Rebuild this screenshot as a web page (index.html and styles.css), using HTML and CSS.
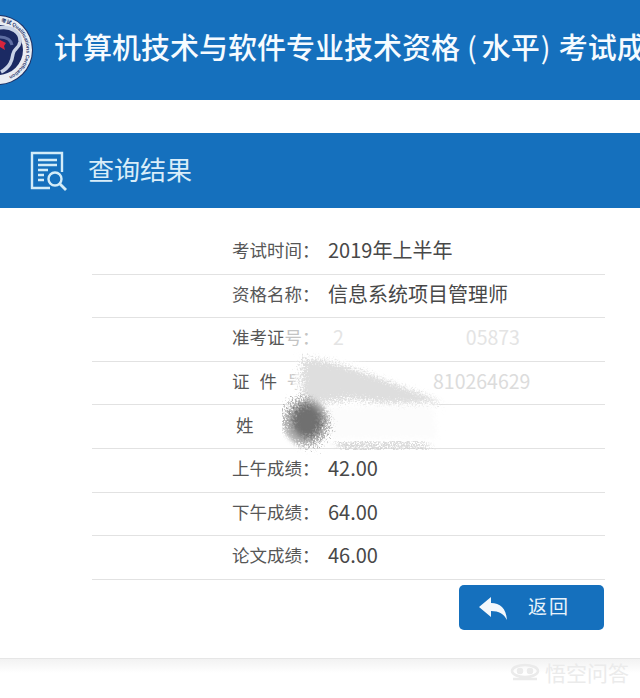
FILE: index.html
```html
<!DOCTYPE html>
<html lang="zh-CN">
<head>
    <meta charset="UTF-8">
    <meta name="viewport" content="width=device-width, initial-scale=1.0">
    <title>查询结果</title>
    <link rel="stylesheet" href="styles.css">
</head>
<body>
    <header class="top-bar">
        <svg class="logo" viewBox="0 0 70 70" width="70" height="70">
            <defs>
                <path id="ringPath" d="M35 6.5a28.5 28.5 0 1 1-.1 0"/>
            </defs>
            <circle cx="35" cy="35" r="35" fill="#1d2f63"/>
            <circle cx="35" cy="35" r="34" fill="#e9edf3"/>
            <circle cx="35" cy="35" r="25" fill="#1b2a63"/>
            <path d="M36 13c12-2 22 4 21 14-1 7-6 6-7 12-1 7-3 13-12 18" fill="none" stroke="#c9d3e6" stroke-width="3.5"/>
            <path d="M36 22c8 0 12 3 13 8" fill="none" stroke="#5f6fa3" stroke-width="3"/>
            <path d="M37 25l6 3-2 3 1 4-5-3z" fill="#d8243c"/>
            <text class="logo-ring-text"><textPath href="#ringPath" startOffset="3">考试 Qualifications Certification</textPath></text>
        </svg>
        <h1 class="top-title">计算机技术与软件专业技术资格<span class="paren-open">(</span>水平<span class="paren-close">)</span>考试成</h1>
    </header>

    <main class="result-panel">
        <div class="panel-head">
            <svg class="panel-icon" viewBox="0 0 38 40" width="38" height="40" fill="none" stroke="#d3ecf8" stroke-width="2.4">
                <path d="M20 37H2V2h30v19"/>
                <path d="M8 9h19M8 14h19M8 19h10M8 24h6M8 29h6"/>
                <circle cx="25" cy="28" r="6.5"/>
                <path d="M30 33l6 6" stroke-width="2.8"/>
            </svg>
            <h2 class="panel-title">查询结果</h2>
        </div>

        <div class="result-rows">
            <div class="row"><span class="label">考试时间：</span><span class="value">2019年上半年</span></div>
            <div class="row"><span class="label">资格名称：</span><span class="value">信息系统项目管理师</span></div>
            <div class="row"><span class="label">准考证<span class="label-faded">号：</span></span><span class="value faded ticket-head">2</span><span class="value faded ticket-no">05873</span></div>
            <div class="row"><span class="label id-label">证 件 <span class="label-faded">号：</span></span><span class="value faded id-no">810264629</span></div>
            <div class="row"><span class="label name-label">姓</span></div>
            <div class="row"><span class="label">上午成绩：</span><span class="value">42.00</span></div>
            <div class="row"><span class="label">下午成绩：</span><span class="value">64.00</span></div>
            <div class="row"><span class="label">论文成绩：</span><span class="value">46.00</span></div>

            <!-- smudge painted over the personal details -->
            <svg class="smudge" viewBox="0 0 190 110" width="190" height="110">
                <defs>
                    <filter id="speckle" x="-30%" y="-30%" width="160%" height="160%">
                        <feTurbulence type="fractalNoise" baseFrequency="0.45" numOctaves="2" seed="4" result="noise"/>
                        <feGaussianBlur in="SourceGraphic" stdDeviation="3" result="soft"/>
                        <feDisplacementMap in="soft" in2="noise" scale="12"/>
                    </filter>
                    <filter id="coarse" x="-40%" y="-40%" width="180%" height="180%">
                        <feTurbulence type="fractalNoise" baseFrequency="0.6" numOctaves="2" seed="9" result="noise"/>
                        <feGaussianBlur in="SourceGraphic" stdDeviation="2" result="soft"/>
                        <feDisplacementMap in="soft" in2="noise" scale="24"/>
                    </filter>
                </defs>
                <path d="M16 12L60 8 150 40 158 88 30 90 8 60z" fill="#fff" filter="url(#speckle)"/>
                <path d="M22 8C55 6 110 34 160 50C130 56 100 54 70 48C50 52 35 54 22 50C18 36 18 20 22 8z" fill="#dedede" filter="url(#coarse)"/>
                <path d="M44 56L150 54 156 88 50 88z" fill="#fcfcfc" filter="url(#speckle)"/>
                <ellipse cx="24" cy="71" rx="23" ry="24" fill="#b4b4b4" filter="url(#coarse)"/>
                <ellipse cx="25" cy="70" rx="15" ry="17" fill="#6f6f6f" filter="url(#speckle)"/>
                <path d="M50 92L150 92 142 96 60 97z" fill="#c8c8c8" filter="url(#coarse)"/>
            </svg>
        </div>

        <div class="actions">
            <button class="back-btn" type="button">
                <svg class="back-icon" viewBox="0 0 28 23" width="28" height="23" fill="#f4f8fc">
                    <path d="M0 10L12 0v6c9 0 15 5 16 17-3-6-8-9-16-9v6z"/>
                </svg>
                <span>返回</span>
            </button>
        </div>
    </main>

    <div class="page-foot"></div>

    <div class="watermark">
        <svg viewBox="0 0 30 18" width="30" height="18" fill="none" stroke="#ebebeb" stroke-width="2.5">
            <ellipse cx="15" cy="8" rx="13" ry="6"/>
            <circle cx="10" cy="8" r="2" fill="#ebebeb"/>
            <circle cx="20" cy="8" r="2" fill="#ebebeb"/>
            <path d="M3 16h24"/>
        </svg>
        <span>悟空问答</span>
    </div>
</body>
</html>
```

FILE: styles.css
```css
html, body {
    margin: 0;
    height: 698px;
    overflow: hidden;
}

body {
    position: relative;
    background-color: #fff;
    font-family: "Noto Sans CJK SC", "Roboto", sans-serif;
}

.top-bar {
    display: flex;
    align-items: center;
    height: 100px;
    background-color: #1570bd;
    overflow: hidden;
}

.logo {
    flex: none;
    margin-left: -37px;
}

.logo-ring-text {
    font-family: "Liberation Sans", sans-serif;
    font-size: 5px;
    font-weight: bold;
    fill: #26386e;
}

.top-title {
    flex: none;
    margin: -9px 0 0 21px;
    color: #f6fbff;
    font-size: 29px;
    font-weight: 500;
    white-space: nowrap;
}

.paren-open {
    margin: 0 5px 0 7px;
    font-weight: 400;
}

.paren-close {
    margin: 0 8px 0 1px;
    font-weight: 400;
}

.result-panel {
    margin-top: 33px;
}

.panel-head {
    display: flex;
    align-items: center;
    height: 75px;
    padding-left: 30px;
    background-color: #1570bd;
}

.panel-title {
    margin: -4px 0 0 20px;
    color: #d9edf9;
    font-size: 26px;
    font-weight: 400;
}

.result-rows {
    position: relative;
    margin: 23px 35px 0 92px;
}

.row {
    display: flex;
    align-items: center;
    box-sizing: border-box;
    height: 43.6px;
    padding: 0 0 5px 140px;
    border-bottom: 1.5px solid #e2e2e2;
}

.label {
    flex: none;
    width: 96px;
    color: #565656;
    font-size: 17.5px;
    white-space: pre;
}

.label-faded {
    color: #c4c4c4;
}

.id-label {
    word-spacing: 6px;
}

.name-label {
    padding-left: 4px;
}

.value {
    color: #484848;
    font-family: "Noto Sans CJK SC", sans-serif;
    font-size: 20px;
}

.faded {
    color: #e4e4e4;
    font-size: 19.5px;
}

.ticket-head {
    margin-left: 5px;
}

.ticket-no {
    margin-left: 122px;
}

.id-no {
    margin-left: 105px;
    color: #dcdcdc;
}

.smudge {
    position: absolute;
    left: 190px;
    top: 120px;
}

.actions {
    display: flex;
    justify-content: flex-end;
    margin: 5px 36px 0 0;
}

.back-btn {
    display: flex;
    align-items: center;
    width: 145px;
    height: 45px;
    padding: 0 0 0 20px;
    border: none;
    border-radius: 5px;
    background-color: #1570bd;
    color: #e8f3fb;
    font-family: inherit;
    font-size: 19px;
}

.back-icon {
    margin-top: 2px;
}

.back-btn span {
    margin: -3px 0 0 21px;
    letter-spacing: 2px;
}

.page-foot {
    height: 14px;
    margin-top: 28px;
    border-top: 1px solid #e6e6e6;
    background: linear-gradient(#f2f2f2, #fff);
}

.watermark {
    position: absolute;
    left: 510px;
    top: 657px;
    display: flex;
    align-items: center;
    gap: 5px;
    color: #ebebeb;
    font-size: 21px;
    white-space: nowrap;
}
```
